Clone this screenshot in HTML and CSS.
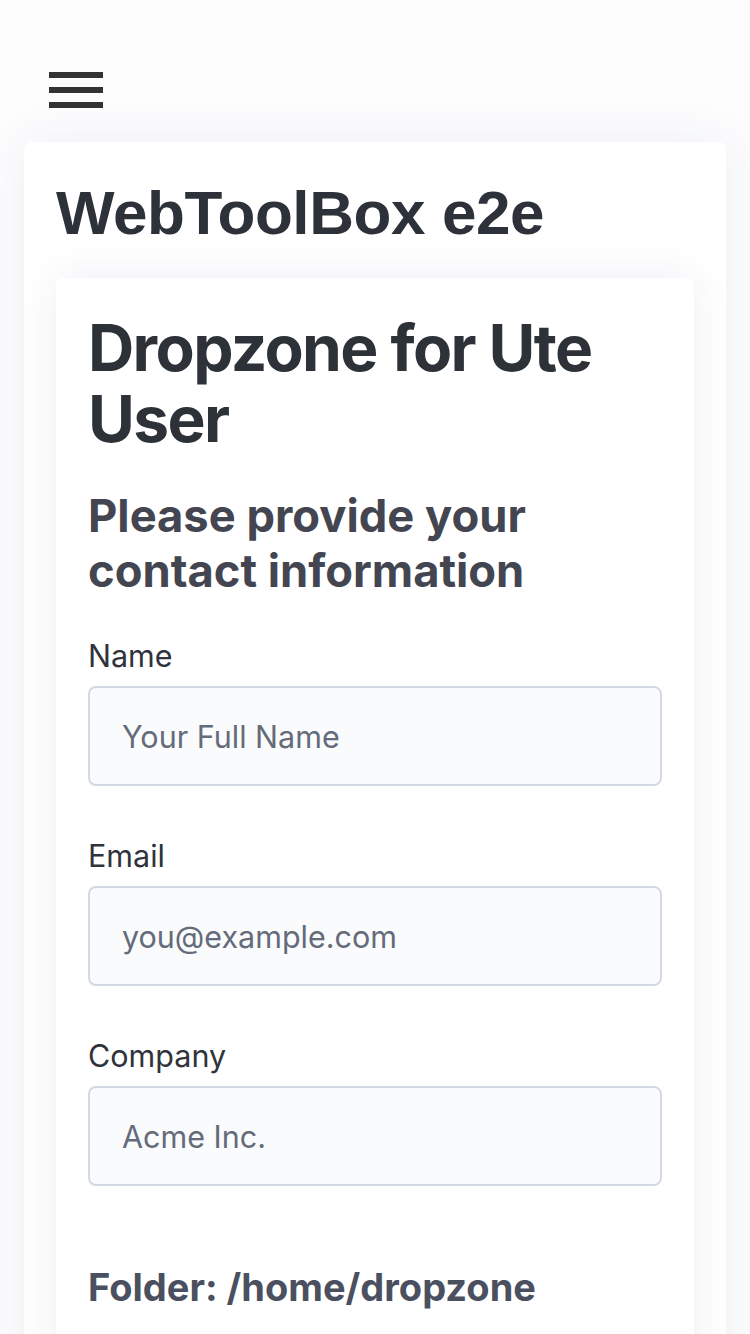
FILE: index.html
```html
<!DOCTYPE html>
<html lang="en">
<head>
<meta charset="utf-8">
<title>WebToolBox e2e</title>
<link rel="stylesheet" href="styles.css">
</head>
<body>
<div class="page">
  <header class="topbar">
    <button class="burger" aria-label="Menu">
      <span></span><span></span><span></span>
    </button>
  </header>
  <main class="outer-card">
    <h1 class="app-title">WebToolBox e2e</h1>
    <section class="inner-card">
      <h1 class="drop-title">Dropzone for Ute User</h1>
      <h2 class="contact-title">Please provide your contact information</h2>
      <form class="form">
        <div class="field">
          <label class="label" for="name">Name</label>
          <input class="input" id="name" type="text" placeholder="Your Full Name">
        </div>
        <div class="field">
          <label class="label" for="email">Email</label>
          <input class="input" id="email" type="email" placeholder="you@example.com">
        </div>
        <div class="field">
          <label class="label" for="company">Company</label>
          <input class="input" id="company" type="text" placeholder="Acme Inc.">
        </div>
      </form>
      <h3 class="folder">Folder: /home/dropzone</h3>
    </section>
  </main>
</div>
</body>
</html>
```

FILE: styles.css
```css
* { box-sizing: border-box; }
html, body { margin: 0; padding: 0; }
body {
  background: #fdfdfe;
  font-family: Inter, "Noto Sans", sans-serif;
  color: #2d3139;
  height: 1334px;
  overflow: hidden;
}
.page {
  padding: 0 24px;
}
.topbar {
  padding-top: 72px;
  height: 142px;
}
.burger {
  display: flex;
  flex-direction: column;
  gap: 9px;
  width: 54px;
  margin-left: 25px;
  padding: 0;
  border: 0;
  background: none;
}
.burger span {
  display: block;
  width: 54px;
  height: 6px;
  background: #333333;
}
.outer-card {
  background: #ffffff;
  border-radius: 8px;
  padding: 35px 32px 0;
  box-shadow: 0 0 50px rgba(40, 50, 110, 0.07);
  min-height: 1300px;
}
.app-title {
  margin: 0 0 30px;
  font-family: "Liberation Sans", Arial, sans-serif;
  font-weight: 700;
  font-size: 62px;
  line-height: 71px;
  letter-spacing: -0.4px;
  color: #2d3139;
}
.inner-card {
  background: #ffffff;
  border-radius: 8px;
  padding: 34px 32px 0;
  box-shadow: 0 0 40px rgba(40, 50, 110, 0.08);
  min-height: 1100px;
}
.drop-title {
  margin: 0;
  font-size: 64px;
  line-height: 71px;
  font-weight: 700;
  letter-spacing: -0.025em;
  color: #2d3138;
}
.contact-title {
  margin: 34px 0 0;
  font-size: 45.3px;
  line-height: 55px;
  font-weight: 700;
  color: #434651;
}
.form {
  margin-top: 36px;
  display: flex;
  flex-direction: column;
  gap: 48px;
}
.field {
  display: flex;
  flex-direction: column;
  gap: 8px;
}
.label {
  font-size: 30.5px;
  line-height: 44px;
  color: #2f333b;
}
.input {
  height: 100px;
  border: 2px solid #d3d8e4;
  border-radius: 8px;
  background: #fafbfc;
  padding: 0 32px;
  font-family: Inter, "Noto Sans", sans-serif;
  font-size: 30.5px;
  color: #2d3139;
  outline: none;
}
.input::placeholder {
  color: #646b7a;
}
.folder {
  margin: 77px 0 0;
  font-size: 38px;
  line-height: 48px;
  font-weight: 700;
  color: #4b5060;
}
```
